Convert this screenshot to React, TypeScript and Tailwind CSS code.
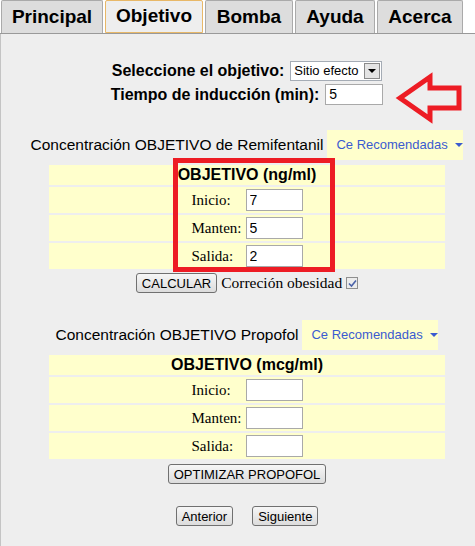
import React from "react";

const tabs = [
  { label: "Principal", w: "w-[102px]" },
  { label: "Objetivo", w: "w-[98px]", active: true },
  { label: "Bomba", w: "w-[88px]" },
  { label: "Ayuda", w: "w-[80px]" },
  { label: "Acerca", w: "w-[86px]" },
];

const Boton = ({ children }: { children: React.ReactNode }) => (
  <button className="h-[20px] px-[5px] border border-[#707070] rounded-[3px] bg-gradient-to-b from-[#f6f6f6] to-[#dcdcdc] text-[13px] leading-none text-black">
    {children}
  </button>
);

const Recomendadas = () => (
  <div className="h-[30px] w-[136px] bg-[#ffffcc] flex items-center pl-[9px] text-[13px] text-[#3b5bd0]">
    Ce Recomendadas
    <span className="ml-[7px] w-0 h-0 border-l-[4px] border-r-[4px] border-t-[4px] border-l-transparent border-r-transparent border-t-[#3b5bd0]" />
  </div>
);

const Fila = ({ label, valor }: { label: string; valor?: string }) => (
  <div className="h-[26px] bg-[#ffffcc] flex items-center justify-center">
    <span className="w-[54px] font-['Liberation_Serif',serif] text-[15px] leading-none">{label}</span>
    <input
      defaultValue={valor}
      className="w-[57px] h-[22px] border border-[#a9a9a9] bg-white pl-[3px] text-[14px] outline-none"
    />
  </div>
);

const Tabla = ({ titulo, valores }: { titulo: string; valores: string[] }) => (
  <div className="w-[396px] mx-auto mt-[5px] flex flex-col gap-[2px]">
    <div className="h-[20px] bg-[#ffffcc] flex items-center justify-center font-bold text-[16px]">{titulo}</div>
    <Fila label="Inicio:" valor={valores[0]} />
    <Fila label="Manten:" valor={valores[1]} />
    <Fila label="Salida:" valor={valores[2]} />
  </div>
);

export default function App() {
  return (
    <div className="relative min-h-screen flex flex-col bg-white font-['Liberation_Sans',Arial,sans-serif] text-black">
      {/* pestañas */}
      <div className="h-[34px] flex items-end gap-[2px] pl-[1px] border-b border-[#999]">
        {tabs.map((t) => (
          <div
            key={t.label}
            className={`${t.w} h-[33px] flex items-center justify-center text-[19px] font-bold rounded-t-[2px] border ${
              t.active ? "bg-[#eeeeee] border-[#e8b868]" : "bg-[#dddddd] border-[#aaaaaa] border-b-0"
            }`}
          >
            {t.label}
          </div>
        ))}
      </div>

      <div className="flex-1 bg-[#eeeeee] border-l border-[#c4c4c4] pl-[18px] pb-[20px]">
        <div className="mt-[26px] h-[21px] flex items-center justify-center gap-[6px] font-bold text-[16px]">
          <span>Seleccione el objetivo:</span>
          <div className="w-[92px] h-[20px] bg-white border border-[#a5acb5] flex items-center justify-between pl-[3px] pr-[1px] font-normal text-[13px]">
            <span>Sitio efecto</span>
            <span className="w-[16px] h-[16px] bg-[#e4e4e4] border border-[#8a8a8a] flex items-center justify-center">
              <span className="w-0 h-0 border-l-[4px] border-r-[4px] border-t-[4px] border-l-transparent border-r-transparent border-t-black" />
            </span>
          </div>
        </div>
        <div className="mt-[3px] h-[21px] flex items-center justify-center gap-[6px] font-bold text-[16px]">
          <span>Tiempo de inducción (min):</span>
          <input defaultValue="5" className="w-[58px] h-[21px] border border-[#a9a9a9] bg-white pl-[3px] font-normal text-[14px] outline-none" />
        </div>

        {/* Remifentanil */}
        <div className="mt-[25px] flex items-center justify-center gap-[4px]">
          <span className="text-[15.5px]">Concentración OBJETIVO de Remifentanil</span>
          <Recomendadas />
        </div>
        <Tabla titulo="OBJETIVO (ng/ml)" valores={["7", "5", "2"]} />
        <div className="mt-[4px] h-[20px] flex items-center justify-center gap-[4px]">
          <Boton>CALCULAR</Boton>
          <span className="font-['Liberation_Serif',serif] text-[15.5px] leading-none">Correción obesidad</span>
          <span className="w-[12px] h-[12px] border border-[#8f8f8f] bg-[#ececec] flex items-center justify-center">
            <svg width="9" height="9" viewBox="0 0 9 9">
              <path d="M1 4.5 L3.5 7 L8 1.5" fill="none" stroke="#4a62a8" strokeWidth="1.6" />
            </svg>
          </span>
        </div>

        {/* Propofol */}
        <div className="mt-[27px] flex items-center justify-center gap-[4px]">
          <span className="text-[15.5px]">Concentración OBJETIVO Propofol</span>
          <Recomendadas />
        </div>
        <Tabla titulo="OBJETIVO (mcg/ml)" valores={["", "", ""]} />
        <div className="mt-[5px] flex justify-center">
          <Boton>OPTIMIZAR PROPOFOL</Boton>
        </div>
        <div className="mt-[22px] flex justify-center gap-[19px]">
          <Boton>Anterior</Boton>
          <Boton>Siguiente</Boton>
        </div>
      </div>

      {/* anotaciones en rojo */}
      <div className="absolute left-[173px] top-[158px] w-[162px] h-[114px] border-[5px] border-[#ed1c24]" />
      <svg className="absolute left-[395px] top-[72px]" width="72" height="52" viewBox="0 0 72 52">
        <polygon points="5,26 35,5 35,16 64,16 64,36 35,36 35,47" fill="none" stroke="#ed1c24" strokeWidth="5" />
      </svg>
    </div>
  );
}
